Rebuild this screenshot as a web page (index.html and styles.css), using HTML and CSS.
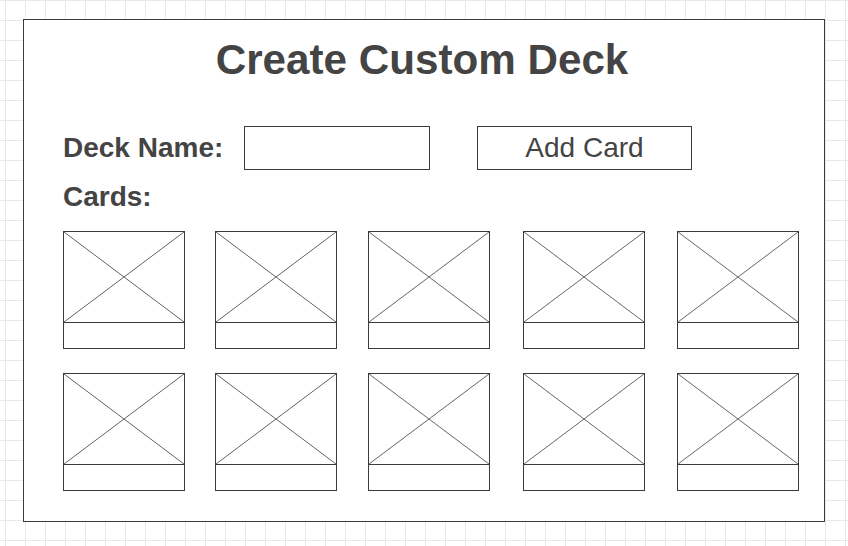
FILE: index.html
```html
<!DOCTYPE html>
<html>
<head>
<meta charset="utf-8">
<link rel="stylesheet" href="styles.css">
</head>
<body>
<div class="panel">
  <h1 class="title">Create Custom Deck</h1>
  <div class="content">
    <div class="form-row">
      <label class="label name-label">Deck Name:</label>
      <div class="input"></div>
      <div class="button">Add Card</div>
    </div>
    <div class="label cards-label">Cards:</div>
    <div class="cards">
      <div class="card"><div class="card-img"><svg viewBox="0 0 120 90" preserveAspectRatio="none"><line x1="0" y1="0" x2="120" y2="90"/><line x1="120" y1="0" x2="0" y2="90"/></svg></div><div class="card-caption"></div></div>
      <div class="card"><div class="card-img"><svg viewBox="0 0 120 90" preserveAspectRatio="none"><line x1="0" y1="0" x2="120" y2="90"/><line x1="120" y1="0" x2="0" y2="90"/></svg></div><div class="card-caption"></div></div>
      <div class="card"><div class="card-img"><svg viewBox="0 0 120 90" preserveAspectRatio="none"><line x1="0" y1="0" x2="120" y2="90"/><line x1="120" y1="0" x2="0" y2="90"/></svg></div><div class="card-caption"></div></div>
      <div class="card"><div class="card-img"><svg viewBox="0 0 120 90" preserveAspectRatio="none"><line x1="0" y1="0" x2="120" y2="90"/><line x1="120" y1="0" x2="0" y2="90"/></svg></div><div class="card-caption"></div></div>
      <div class="card"><div class="card-img"><svg viewBox="0 0 120 90" preserveAspectRatio="none"><line x1="0" y1="0" x2="120" y2="90"/><line x1="120" y1="0" x2="0" y2="90"/></svg></div><div class="card-caption"></div></div>
    </div>
    <div class="cards">
      <div class="card"><div class="card-img"><svg viewBox="0 0 120 90" preserveAspectRatio="none"><line x1="0" y1="0" x2="120" y2="90"/><line x1="120" y1="0" x2="0" y2="90"/></svg></div><div class="card-caption"></div></div>
      <div class="card"><div class="card-img"><svg viewBox="0 0 120 90" preserveAspectRatio="none"><line x1="0" y1="0" x2="120" y2="90"/><line x1="120" y1="0" x2="0" y2="90"/></svg></div><div class="card-caption"></div></div>
      <div class="card"><div class="card-img"><svg viewBox="0 0 120 90" preserveAspectRatio="none"><line x1="0" y1="0" x2="120" y2="90"/><line x1="120" y1="0" x2="0" y2="90"/></svg></div><div class="card-caption"></div></div>
      <div class="card"><div class="card-img"><svg viewBox="0 0 120 90" preserveAspectRatio="none"><line x1="0" y1="0" x2="120" y2="90"/><line x1="120" y1="0" x2="0" y2="90"/></svg></div><div class="card-caption"></div></div>
      <div class="card"><div class="card-img"><svg viewBox="0 0 120 90" preserveAspectRatio="none"><line x1="0" y1="0" x2="120" y2="90"/><line x1="120" y1="0" x2="0" y2="90"/></svg></div><div class="card-caption"></div></div>
    </div>
  </div>
</div>
</body>
</html>
```
FILE: styles.css
```css
html, body {
  margin: 0;
  padding: 0;
}
body {
  width: 848px;
  height: 546px;
  overflow: hidden;
  font-family: "Liberation Sans", Arial, sans-serif;
  color: #444;
  background-color: #fff;
  background-image:
    linear-gradient(to right, #e8e8e8 1px, transparent 1px),
    linear-gradient(to bottom, #e8e8e8 1px, transparent 1px);
  background-size: 20px 20px, 20px 20px;
  background-position: 5px 0, 0 0;
  padding-top: 19px;
  box-sizing: border-box;
}
.panel {
  box-sizing: border-box;
  width: 802px;
  height: 503px;
  margin-left: 23px;
  border: 1px solid #3c3c3c;
  background: #fff;
  padding-top: 16px;
}
.title {
  margin: 0;
  padding-right: 4px;
  font-size: 42.2px;
  line-height: 48px;
  font-weight: bold;
  text-align: center;
  color: #444;
}
.content {
  padding: 0 25px 0 39px;
}
.form-row {
  display: flex;
  align-items: center;
  margin-top: 42px;
  height: 44px;
}
.label {
  font-size: 28px;
  line-height: 32px;
  font-weight: bold;
  color: #444;
}
.name-label {
  width: 181px;
  flex: none;
}
.input {
  box-sizing: border-box;
  width: 186px;
  height: 44px;
  border: 1px solid #3c3c3c;
  flex: none;
}
.button {
  box-sizing: border-box;
  width: 215px;
  height: 44px;
  margin-left: 47px;
  border: 1px solid #3c3c3c;
  font-size: 28px;
  line-height: 42px;
  text-align: center;
  color: #444;
  flex: none;
}
.cards-label {
  margin-top: 11px;
}
.cards {
  display: grid;
  grid-template-columns: 152px 153px 155px 154px 122px;
  margin-top: 18px;
}
.cards + .cards {
  margin-top: 24px;
}
.card {
  box-sizing: border-box;
  width: 122px;
  border: 1px solid #3c3c3c;
}
.card-img {
  height: 90px;
  border-bottom: 1px solid #3c3c3c;
}
.card-img svg {
  display: block;
  width: 120px;
  height: 90px;
}
.card-img line {
  stroke: #666;
  stroke-width: 1;
}
.card-caption {
  height: 25px;
}
```
